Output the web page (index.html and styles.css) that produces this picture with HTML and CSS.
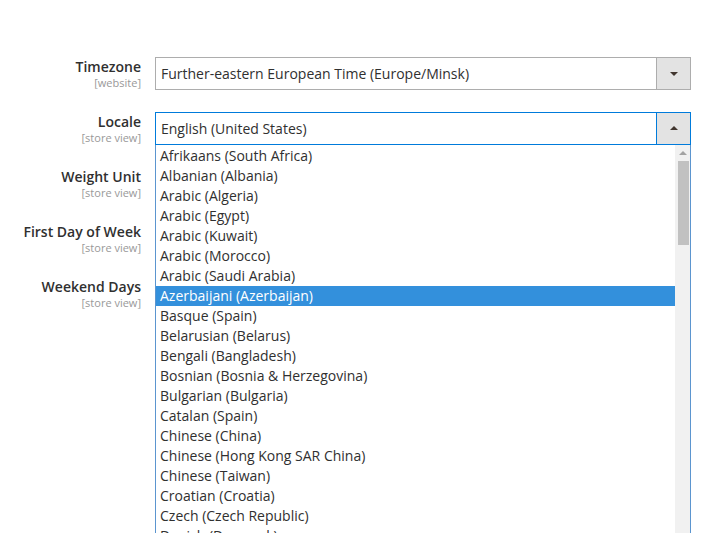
FILE: index.html
```html
<!DOCTYPE html>
<html lang="en">
<head>
<meta charset="utf-8">
<title>Locale Options</title>
<link rel="stylesheet" href="styles.css">
</head>
<body>
<div class="form">
  <div class="row">
    <div class="label"><span class="title">Timezone</span><span class="scope">[website]</span></div>
    <div class="field">
      <div class="select">
        <span class="value">Further-eastern European Time (Europe/Minsk)</span>
        <span class="btn"><span class="arrow down"></span></span>
      </div>
    </div>
  </div>
  <div class="row">
    <div class="label"><span class="title">Locale</span><span class="scope">[store view]</span></div>
    <div class="field">
      <div class="select open">
        <span class="value">English (United States)</span>
        <span class="btn"><span class="arrow up"></span></span>
      </div>
      <div class="listbox">
        <ul class="options">
          <li>Afrikaans (South Africa)</li>
          <li>Albanian (Albania)</li>
          <li>Arabic (Algeria)</li>
          <li>Arabic (Egypt)</li>
          <li>Arabic (Kuwait)</li>
          <li>Arabic (Morocco)</li>
          <li>Arabic (Saudi Arabia)</li>
          <li class="selected">Azerbaijani (Azerbaijan)</li>
          <li>Basque (Spain)</li>
          <li>Belarusian (Belarus)</li>
          <li>Bengali (Bangladesh)</li>
          <li>Bosnian (Bosnia &amp; Herzegovina)</li>
          <li>Bulgarian (Bulgaria)</li>
          <li>Catalan (Spain)</li>
          <li>Chinese (China)</li>
          <li>Chinese (Hong Kong SAR China)</li>
          <li>Chinese (Taiwan)</li>
          <li>Croatian (Croatia)</li>
          <li>Czech (Czech Republic)</li>
          <li>Danish (Denmark)</li>
        </ul>
        <div class="scrollbar">
          <span class="sb-up"></span>
          <span class="thumb"></span>
        </div>
      </div>
    </div>
  </div>
  <div class="row">
    <div class="label"><span class="title">Weight Unit</span><span class="scope">[store view]</span></div>
    <div class="field"></div>
  </div>
  <div class="row">
    <div class="label"><span class="title">First Day of Week</span><span class="scope">[store view]</span></div>
    <div class="field"></div>
  </div>
  <div class="row">
    <div class="label"><span class="title">Weekend Days</span><span class="scope">[store view]</span></div>
    <div class="field"></div>
  </div>
</div>
</body>
</html>
```

FILE: styles.css
```css
html, body {
  margin: 0;
  padding: 0;
  height: 100%;
  overflow: hidden;
  background: #fff;
}
body {
  font-family: "Open Sans", "Liberation Sans", sans-serif;
  color: #303030;
}
.form {
  padding-top: 57px;
  display: flex;
  flex-direction: column;
  gap: 22px;
}
.row {
  display: grid;
  grid-template-columns: 141px 536px;
  column-gap: 14px;
  height: 33px;
}
.label {
  display: flex;
  flex-direction: column;
  align-items: flex-end;
  text-align: right;
  padding-top: 1px;
}
.title {
  font-size: 14px;
  font-weight: 600;
  line-height: 17px;
  color: #303030;
}
.scope {
  font-size: 11px;
  line-height: 15px;
  color: #999;
}
.field {
  position: relative;
}
.select {
  box-sizing: border-box;
  height: 33px;
  border: 1px solid #adadad;
  display: flex;
  background: #fff;
}
.select.open {
  border-color: #007bdb;
}
.value {
  flex: 1;
  font-size: 14px;
  line-height: 31px;
  padding-left: 5px;
  white-space: nowrap;
}
.btn {
  width: 33px;
  border-left: 1px solid #adadad;
  background: #e3e3e3;
  display: flex;
  align-items: center;
  justify-content: center;
}
.select.open .btn {
  border-left-color: #007bdb;
}
.arrow {
  width: 0;
  height: 0;
  border-left: 4px solid transparent;
  border-right: 4px solid transparent;
}
.arrow.down {
  border-top: 4px solid #41362f;
  margin-top: 1px;
}
.arrow.up {
  border-bottom: 4px solid #41362f;
  margin-top: -1px;
}
.listbox {
  position: absolute;
  top: 33px;
  left: 0;
  width: 536px;
  height: 388px;
  box-sizing: border-box;
  border: 1px solid #5b95cf;
  border-top: 0;
  border-bottom: 0;
  background: #fff;
  display: flex;
  z-index: 5;
  overflow: hidden;
}
.options {
  list-style: none;
  margin: 0;
  padding: 1px 0 0;
  flex: 1;
  overflow: hidden;
}
.options li {
  height: 20px;
  line-height: 20px;
  font-size: 14px;
  padding-left: 4px;
  white-space: nowrap;
  color: #303030;
}
.options li.selected {
  background: #3390dc;
  color: #fff;
}
.scrollbar {
  width: 15px;
  background: #f1f1f1;
  display: flex;
  flex-direction: column;
  align-items: center;
}
.sb-up {
  width: 0;
  height: 0;
  border-left: 4px solid transparent;
  border-right: 4px solid transparent;
  border-bottom: 4px solid #a3a3a3;
  margin-top: 6px;
}
.thumb {
  width: 11px;
  height: 84px;
  background: #c1c1c1;
  margin-top: 6px;
  margin-left: 1px;
}
```
